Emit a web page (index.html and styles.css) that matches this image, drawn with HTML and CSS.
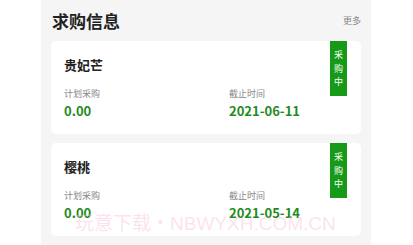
FILE: index.html
```html
<!DOCTYPE html>
<html lang="zh-CN">
<head>
<meta charset="utf-8">
<title>求购信息</title>
<link rel="stylesheet" href="styles.css">
</head>
<body>
<div class="panel">
  <div class="header">
    <h2 class="title">求购信息</h2>
    <span class="more">更多</span>
  </div>
  <div class="list">
    <div class="card">
      <div class="badge">采<br>购<br>中</div>
      <div class="name">贵妃芒</div>
      <div class="info">
        <div class="col">
          <div class="label">计划采购</div>
          <div class="value">0.00</div>
        </div>
        <div class="col">
          <div class="label">截止时间</div>
          <div class="value">2021-06-11</div>
        </div>
      </div>
    </div>
    <div class="card">
      <div class="badge">采<br>购<br>中</div>
      <div class="name">樱桃</div>
      <div class="info">
        <div class="col">
          <div class="label">计划采购</div>
          <div class="value">0.00</div>
        </div>
        <div class="col">
          <div class="label">截止时间</div>
          <div class="value">2021-05-14</div>
        </div>
      </div>
    </div>
  </div>
</div>
<div class="watermark">玩意下载・NBWYXH.COM.CN</div>
</body>
</html>
```

FILE: styles.css
```css
html, body {
  margin: 0;
  padding: 0;
  background: #ffffff;
  font-family: "Noto Sans CJK SC", "Noto Sans", sans-serif;
}
body {
  width: 413px;
  height: 245px;
  overflow: hidden;
  position: relative;
}
.panel {
  margin-left: 41px;
  width: 330px;
  height: 245px;
  background: #f5f5f5;
}
.header {
  height: 41px;
  display: flex;
  align-items: center;
  justify-content: space-between;
  padding: 0 10px 0 11px;
}
.title {
  margin: 0;
  font-size: 17px;
  line-height: 22px;
  font-weight: 700;
  color: #222222;
}
.more {
  font-size: 9px;
  line-height: 12px;
  color: #888888;
}
.list {
  display: flex;
  flex-direction: column;
  gap: 9px;
  padding: 0 10px;
}
.card {
  position: relative;
  height: 93px;
  box-sizing: border-box;
  background: #ffffff;
  border-radius: 5px;
  padding: 15px 13px 0 13px;
}
.badge {
  position: absolute;
  top: 0;
  right: 14px;
  width: 17px;
  padding: 7px 0;
  background: #179a17;
  color: #ffffff;
  font-size: 9px;
  line-height: 13.5px;
  text-align: center;
}
.name {
  font-size: 13px;
  line-height: 18px;
  font-weight: 700;
  color: #222222;
}
.info {
  margin-top: 13px;
  display: grid;
  grid-template-columns: 165px 1fr;
}
.label {
  font-size: 9px;
  line-height: 14px;
  color: #888888;
}
.value {
  margin-top: 1px;
  font-size: 13px;
  line-height: 18px;
  font-weight: 700;
  color: #1f8b1f;
}
.watermark {
  position: absolute;
  left: 75px;
  top: 211px;
  font-family: "Liberation Sans", "Noto Sans CJK SC", sans-serif;
  font-size: 19px;
  line-height: 26px;
  color: rgba(250, 190, 220, 0.45);
  white-space: nowrap;
  pointer-events: none;
}
```
